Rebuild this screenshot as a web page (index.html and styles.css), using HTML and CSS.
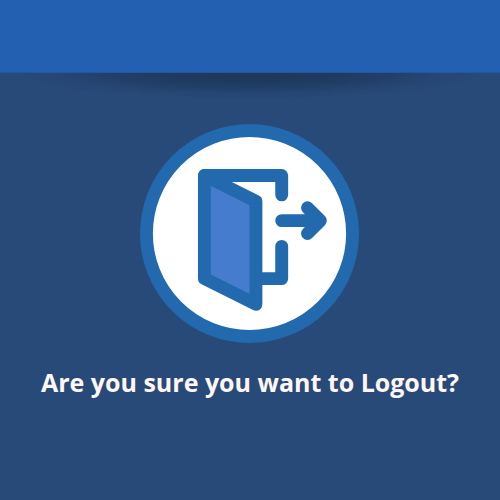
FILE: index.html
```html
<!DOCTYPE html>
<html lang="en">
<head>
<meta charset="utf-8">
<meta name="viewport" content="width=device-width, initial-scale=1">
<title>Logout</title>
<link rel="stylesheet" href="styles.css">
</head>
<body>
<header class="bar"></header>
<main class="content">
  <svg class="icon" viewBox="0 0 34 34" preserveAspectRatio="xMinYMin meet" aria-hidden="true">
    <circle class="disc" cx="17" cy="17" r="16"/>
    <path class="line" d="M10 8H22V11M22 19V24H18"/>
    <path class="door" d="M10 8L18 12V28L10 24Z"/>
    <path class="line" d="M22 15H28M26 13L28 15L26 17"/>
  </svg>
  <h1 class="question">Are you sure you want to Logout?</h1>
</main>
</body>
</html>
```
FILE: styles.css
```css
body {
  margin: 0;
  min-height: 100vh;
  display: flex;
  flex-direction: column;
  background: #284a78;
  font-family: "Open Sans", "Noto Sans", sans-serif;
}

.bar {
  box-sizing: border-box;
  height: 73px;
  background: #2460b2;
  border-bottom: 1px solid #2557a0;
}

.content {
  flex: 1;
  display: flex;
  flex-direction: column;
  align-items: center;
  padding-top: 51px;
  background: radial-gradient(ellipse 47% 26px at 50% 0, #1f385b 0%, #1f3a5e 35%, #223f69 60%, #264673 80%, #284a78 100%) no-repeat;
}

.icon {
  width: 220px;
  height: 219px;
  stroke: #2269ae;
  stroke-width: 2;
  stroke-linecap: round;
  stroke-linejoin: round;
}

.disc {
  fill: #fff;
}

.line {
  fill: none;
}

.door {
  fill: #467ccd;
}

.question {
  margin: 21px 0 0;
  color: #fff7f5;
  font-size: 25px;
  font-weight: 700;
  line-height: 36px;
  white-space: nowrap;
}
```
